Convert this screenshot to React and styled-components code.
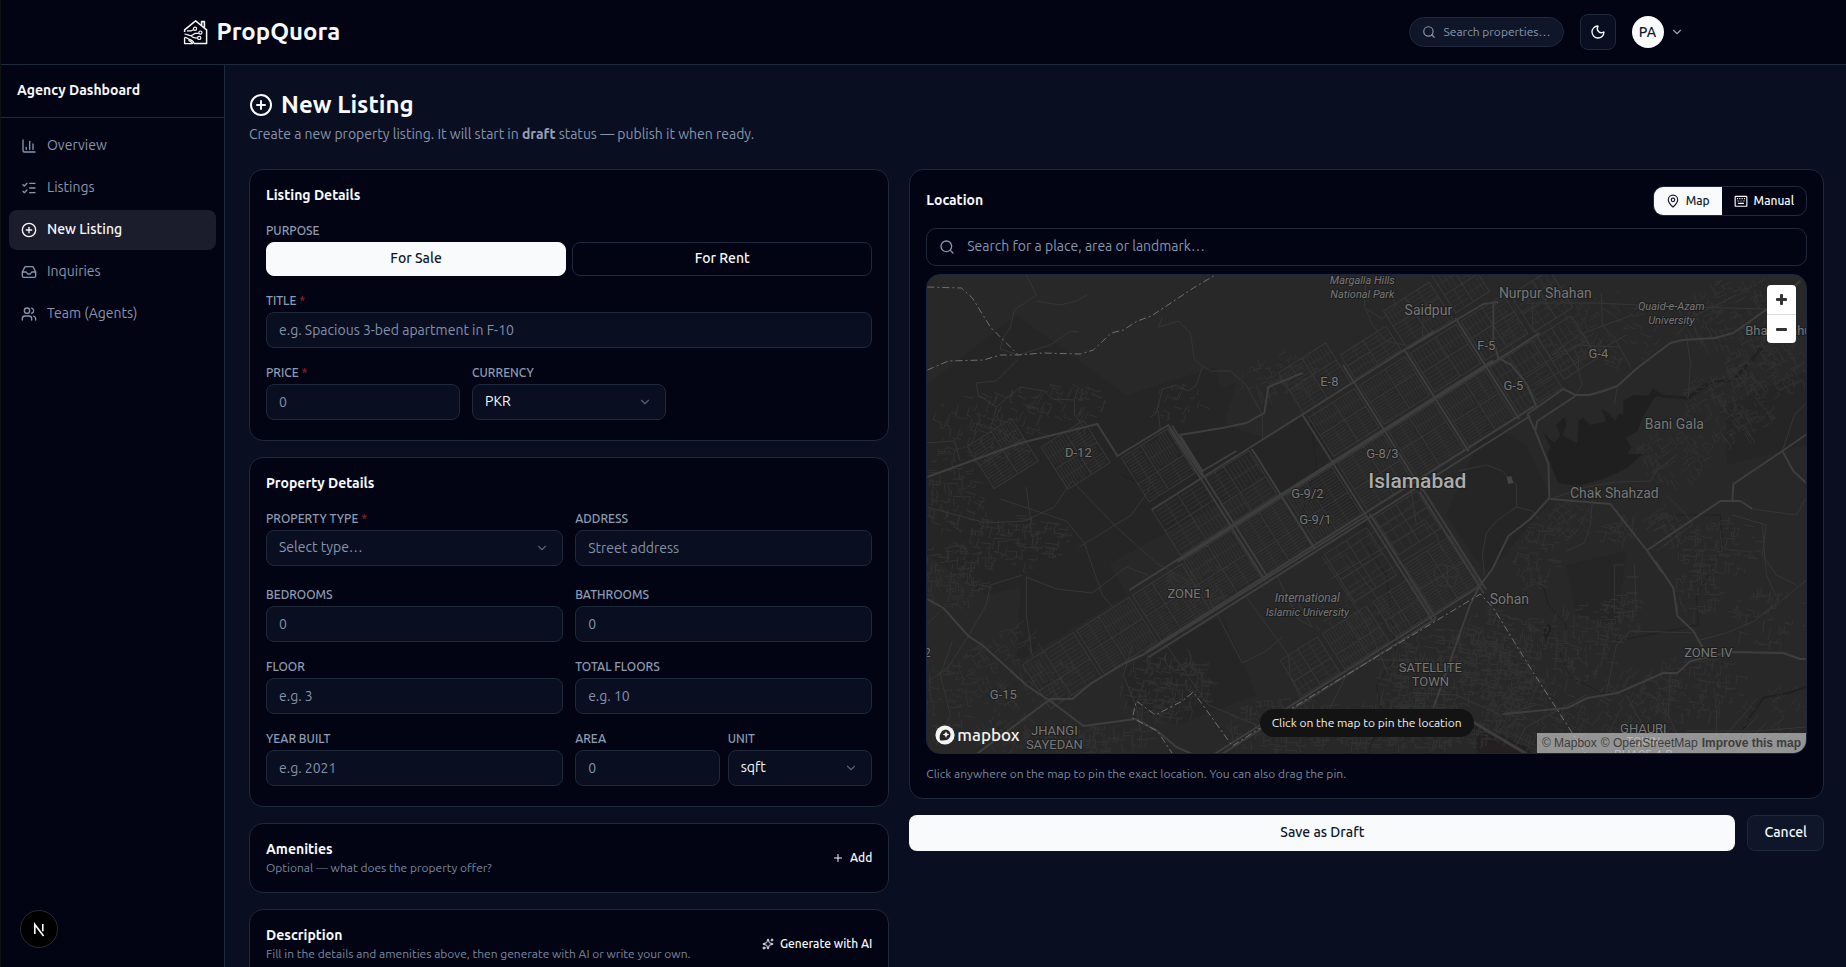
import React from "react";
import styled, { createGlobalStyle, css } from "styled-components";
import {
  ChartColumn,
  ChevronDown,
  CirclePlus,
  Inbox,
  ListChecks,
  MapPin,
  Moon,
  Plus,
  Search,
  Sparkles,
  Users
} from "lucide-react";

const GlobalStyle = createGlobalStyle`
  *, *::before, *::after {
    box-sizing: border-box;
  }
  body {
    margin: 0;
    background: #090e20;
    color: #f8fafc;
    font-family: Ubuntu, "Noto Sans", sans-serif;
    font-size: 14px;
    line-height: 20px;
  }
  button, input, select {
    font: inherit;
    color: inherit;
  }
  h1, h2, p {
    margin: 0;
  }
  a {
    color: inherit;
    text-decoration: none;
  }
`;

/* ---------- page shell ---------- */

const Page = styled.div`
  display: flex;
  flex-direction: column;
  height: 100vh;
  border-left: 1px solid #101113;
`;

const Header = styled.header`
  flex: none;
  background: #020414;
  border-bottom: 1px solid #1e293b;
`;

const HeaderInner = styled.div`
  display: flex;
  align-items: center;
  justify-content: space-between;
  height: 64px;
  max-width: 1536px;
  margin: 0 auto;
  padding: 0 8px 0 27px;
`;

const Brand = styled.a`
  display: flex;
  align-items: center;
  gap: 8px;
  font-size: 24px;
  line-height: 32px;
  font-weight: 600;
`;

const HeaderActions = styled.div`
  display: flex;
  align-items: center;
  gap: 16px;
`;

const HeaderSearch = styled.button`
  display: flex;
  align-items: center;
  gap: 8px;
  height: 30px;
  padding: 0 12px;
  border: 1px solid #1e293b;
  border-radius: 15px;
  background: #0f1629;
  color: #8896ad;
  font-size: 12px;
`;

const IconButton = styled.button`
  display: grid;
  place-items: center;
  width: 36px;
  height: 36px;
  padding: 0;
  border: 1px solid #1e293b;
  border-radius: 8px;
  background: #090e20;
`;

const AccountButton = styled.button`
  display: flex;
  align-items: center;
  gap: 6px;
  padding: 0;
  border: 0;
  background: none;
  color: #94a3b8;
`;

const Avatar = styled.span`
  display: grid;
  place-items: center;
  width: 32px;
  height: 32px;
  border-radius: 50%;
  background: #f8fafc;
  color: #0f172a;
  font-weight: 500;
`;

const Body = styled.div`
  display: flex;
  flex: 1;
  min-height: 0;
`;

/* ---------- sidebar ---------- */

const Sidebar = styled.aside`
  display: flex;
  flex-direction: column;
  flex: none;
  width: 224px;
  background: #020414;
  border-right: 1px solid #1e293b;
`;

const SidebarTitle = styled.div`
  padding: 15px 16px 17px;
  border-bottom: 1px solid #1e293b;
  font-weight: 600;
`;

const Nav = styled.nav`
  display: flex;
  flex-direction: column;
  flex: 1;
  gap: 2px;
  padding: 8px;
`;

const NavItem = styled.a`
  display: flex;
  align-items: center;
  gap: 10px;
  height: 40px;
  padding: 0 12px;
  border-radius: 8px;
  color: #8896ad;

  ${props =>
    props.$active &&
    css`
      background: #1b1d2d;
      color: #f8fafc;
      font-weight: 500;
    `}
`;

const NavText = styled.span`
  padding-bottom: 2px;
`;

const DevBadge = styled.button`
  display: grid;
  place-items: center;
  width: 38px;
  height: 38px;
  margin: 0 0 19px 19px;
  padding: 0;
  border: 1px solid #2b2c31;
  border-radius: 50%;
  background: #000;
`;

/* ---------- main ---------- */

const Main = styled.main`
  flex: 1;
  min-width: 0;
  padding: 24px 22px 24px 24px;
  overflow-y: auto;
  scrollbar-width: none;
`;

const PageTitle = styled.h1`
  display: flex;
  align-items: center;
  gap: 8px;
  font-size: 24px;
  line-height: 32px;
  font-weight: 600;
`;

const PageLead = styled.p`
  margin: 3px 0 25px;
  color: #8896ad;

  strong {
    font-weight: 600;
    color: #94a3b8;
  }
`;

const Columns = styled.form`
  display: grid;
  grid-template-columns: 7fr 10fr;
  align-items: start;
  gap: 20px;
`;

const Column = styled.div`
  display: flex;
  flex-direction: column;
  gap: 16px;
  min-width: 0;
`;

const Card = styled.section`
  padding: 16px;
  border: 1px solid #1e293b;
  border-radius: 14px;
  background: #020414;
`;

const FormCard = styled(Card)`
  display: flex;
  flex-direction: column;
  gap: 16px;
  padding-bottom: 20px;
`;

const CardTitle = styled.h2`
  padding-bottom: 2px;
  font-size: 14px;
  line-height: 18px;
  font-weight: 600;
`;

const CardHead = styled.div`
  display: flex;
  align-items: center;
  justify-content: space-between;
`;

const Hint = styled.p`
  color: #7b899f;
  font-size: 12px;
  line-height: 16px;
`;

const TextButton = styled.button`
  display: flex;
  align-items: center;
  gap: 6px;
  padding: 0;
  border: 0;
  background: none;
  font-size: 12px;
  font-weight: 500;
`;

/* ---------- form parts ---------- */

const FieldBox = styled.div`
  display: flex;
  flex-direction: column;
  gap: 2px;
  min-width: 0;
`;

const labelText = css`
  color: #8e9cb3;
  font-size: 12px;
  line-height: 18px;
  font-weight: 500;
  text-transform: uppercase;
`;

const Label = styled.label`
  ${labelText}
`;

const GroupLabel = styled.span`
  ${labelText}
`;

const Required = styled.span`
  color: #8f1f22;
`;

const control = css`
  width: 100%;
  height: 36px;
  padding: 0 12px;
  border: 1px solid #1e293b;
  border-radius: 8px;
  background: #090e20;
  outline: none;
`;

const Input = styled.input`
  ${control}

  &::placeholder {
    color: #8491a8;
    opacity: 1;
  }
`;

const SelectWrap = styled.div`
  position: relative;

  svg {
    position: absolute;
    top: 11px;
    right: 14px;
    color: #566277;
    pointer-events: none;
  }
`;

const SelectInput = styled.select`
  ${control}
  appearance: none;
  padding: 0 32px 2px 12px;
  color: ${props => (props.$empty ? "#8896ad" : "#f8fafc")};
`;

const FieldRow = styled.div`
  display: grid;
  grid-template-columns: repeat(${props => props.$cols || 2}, minmax(0, 1fr));
  gap: ${props => props.$gap || 12}px;
`;

const TypeRow = styled(FieldRow)`
  margin-bottom: 4px;
`;

const Choice = styled.button`
  height: 34px;
  padding: 0 12px 2px;
  border: 1px solid ${props => (props.$on ? "#f8fafc" : "#1e293b")};
  border-radius: 8px;
  background: ${props => (props.$on ? "#f8fafc" : "transparent")};
  color: ${props => (props.$on ? "#0f172a" : "#f8fafc")};
  font-weight: 500;
`;

const TextArea = styled.textarea`
  ${control}
  height: 120px;
  margin-top: 16px;
  padding: 8px 12px;
  font: inherit;
`;

/* ---------- location ---------- */

const ModeSwitch = styled.div`
  display: flex;
  height: 30px;
  border: 1px solid #1e293b;
  border-radius: 10px;
  overflow: hidden;
`;

const ModeButton = styled.button`
  display: flex;
  align-items: center;
  gap: 6px;
  padding: 0 12px;
  border: 0;
  background: ${props => (props.$on ? "#f8fafc" : "transparent")};
  color: ${props => (props.$on ? "#0f172a" : "#f8fafc")};
  font-size: 12px;
  font-weight: 500;
`;

const PlaceSearch = styled.label`
  display: flex;
  align-items: center;
  gap: 12px;
  height: 38px;
  margin: 12px 0 8px;
  padding: 0 12px;
  border: 1px solid #1e293b;
  border-radius: 10px;
  color: #8896ad;
`;

const PlaceInput = styled.input`
  flex: 1;
  padding: 0 0 2px;
  border: 0;
  outline: none;
  background: none;

  &::placeholder {
    color: #8896ad;
    opacity: 1;
  }
`;

const MapFrame = styled.div`
  position: relative;
  height: 480px;
  margin-bottom: 12px;
  border: 1px solid #1a2740;
  border-radius: 14px;
  background: #282828;
  overflow: hidden;
`;

const MapDrawing = styled.svg`
  display: block;
  width: 100%;
  height: 100%;
  font-family: Roboto, "Noto Sans", sans-serif;
`;

const ZoomControl = styled.div`
  position: absolute;
  top: 10px;
  right: 10px;
  display: flex;
  flex-direction: column;
  border-radius: 4px;
  background: #fff;
  overflow: hidden;
`;

const ZoomButton = styled.button`
  display: grid;
  place-items: center;
  width: 29px;
  height: 29px;
  padding: 0;
  border: 0;
  background: none;

  & + & {
    border-top: 1px solid #ddd;
  }
`;

const MapNotice = styled.div`
  position: absolute;
  bottom: 16px;
  left: 50%;
  transform: translateX(-50%);
  padding: 6px 12px;
  border-radius: 14px;
  background: #131313;
  color: #f1f1f1;
  font-size: 12px;
  line-height: 16px;
  white-space: nowrap;
`;

const MapboxMark = styled.a`
  position: absolute;
  bottom: 8px;
  left: 8px;
  display: flex;
  align-items: center;
  gap: 2px;
  color: #f4f4f4;
  font-size: 17px;
  line-height: 20px;
  font-weight: 500;
`;

const Attribution = styled.div`
  position: absolute;
  right: 0;
  bottom: 0;
  display: flex;
  gap: 4px;
  height: 20px;
  padding: 0 5px;
  background: rgba(255, 255, 255, 0.5);
  color: #3d3d3d;
  font-family: "Liberation Sans", Arial, sans-serif;
  font-size: 12px;
  line-height: 20px;

  a:last-child {
    font-weight: 700;
  }
`;

const FormActions = styled.div`
  display: flex;
  gap: 12px;
`;

const SaveButton = styled.button`
  flex: 1;
  height: 36px;
  padding: 0 0 2px;
  border: 0;
  border-radius: 8px;
  background: #f8fafc;
  color: #0f172a;
  font-weight: 500;
`;

const CancelButton = styled.button`
  height: 36px;
  padding: 0 16px 2px;
  border: 1px solid #1e293b;
  border-radius: 8px;
  background: #0f1629;
  font-weight: 500;
`;

/* ---------- map data ---------- */

// small seeded generator, so the street pattern is the same on every load
const makeRandom = seed => () => {
  seed = (seed * 16807) % 2147483647;
  return seed / 2147483647;
};

// sectors on the city grid: [u, v, width, height, density]
const sectors = [
  [-240, -58, 58, 54, 3],
  [-178, -120, 58, 54, 4],
  [-178, -60, 56, 56, 3],
  [-116, -60, 54, 56, 3],
  [-57, -60, 54, 56, 3],
  [4, -60, 54, 56, 3],
  [4, -114, 54, 46, 3],
  [64, -60, 54, 56, 3],
  [64, -114, 54, 46, 3],
  [64, -150, 54, 28, 4],
  [124, -60, 54, 56, 3],
  [124, -114, 54, 46, 4],
  [124, -164, 54, 44, 4],
  [184, -60, 50, 56, 5],
  [184, -114, 50, 46, 4],
  [184, -170, 40, 46, 5],
  [2, -168, 56, 48, 4],
  [-116, -118, 52, 52, 4],
  [6, 6, 50, 44, 9],
  [6, 62, 54, 56, 3],
  [-40, 76, 42, 42, 3],
  [-100, 76, 52, 42, 3],
  [-150, 76, 44, 42, 5],
  [-56, 10, 50, 56, 11],
  [-370, -58, 60, 52, 4],
  [-306, -58, 62, 52, 3],
  [-238, -232, 50, 50, 3],
  [-176, -180, 54, 52, 3],
  [-300, -272, 52, 50, 3],
  [240, -60, 40, 50, 7],
  [240, -110, 46, 44, 7]
];

const buildSectors = () => {
  const rand = makeRandom(71);
  const fine = [];
  const mid = [];
  sectors.forEach(([u, v, w, h, step]) => {
    mid.push(`M${u} ${v}h${w}v${h}h${-w}z`);
    const cx = Math.round(u + w * (0.4 + rand() * 0.2));
    const cy = Math.round(v + h * (0.4 + rand() * 0.2));
    mid.push(`M${cx} ${v}v${h}M${u} ${cy}h${w}`);
    [
      [u, v, cx, cy],
      [cx, v, u + w, cy],
      [u, cy, cx, v + h],
      [cx, cy, u + w, v + h]
    ].forEach(([x0, y0, x1, y1]) => {
      const across = rand() > 0.5;
      if (across) {
        for (let y = y0 + step; y < y1 - 1; y += step) {
          const a = x0 + Math.floor(rand() * 4);
          const b = x1 - Math.floor(rand() * 5);
          fine.push(`M${a} ${y}H${b}`);
        }
        fine.push(`M${Math.round((x0 + x1) / 2)} ${y0}V${y1}`);
      } else {
        for (let x = x0 + step; x < x1 - 1; x += step) {
          const a = y0 + Math.floor(rand() * 4);
          const b = y1 - Math.floor(rand() * 5);
          fine.push(`M${x} ${a}V${b}`);
        }
        fine.push(`M${x0} ${Math.round((y0 + y1) / 2)}H${x1}`);
      }
    });
  });
  return { fine: fine.join(""), mid: mid.join("") };
};

// loose suburbs: [centre x, centre y, radius x, radius y, lanes, angle]
const suburbs = [
  [530, 410, 80, 60, 520, 0.1],
  [470, 450, 70, 26, 240, 0.1],
  [570, 380, 40, 50, 160, 0.3],
  [360, 450, 60, 28, 150, 0],
  [240, 410, 45, 34, 170, 0.2],
  [90, 395, 60, 44, 130, -0.5],
  [25, 300, 36, 34, 120, 0],
  [90, 265, 50, 26, 110, 0.1],
  [60, 150, 60, 34, 90, 0.3],
  [130, 125, 50, 22, 60, 0.4],
  [20, 200, 30, 30, 50, 0],
  [20, 420, 26, 40, 50, 0],
  [95, 460, 60, 20, 80, -0.6],
  [180, 465, 40, 16, 70, 0],
  [30, 235, 36, 20, 40, 0.4],
  [270, 310, 32, 26, 90, -0.5],
  [250, 125, 26, 20, 24, 0.4],
  [350, 100, 40, 22, 70, -0.4],
  [630, 50, 60, 36, 80, -0.5],
  [690, 50, 50, 40, 50, 0.5],
  [805, 40, 60, 36, 140, -0.4],
  [840, 88, 44, 30, 130, -0.5],
  [800, 130, 50, 34, 140, -0.5],
  [745, 180, 40, 26, 80, -0.6],
  [610, 280, 22, 34, 60, 0.2],
  [645, 240, 20, 18, 50, 0.8],
  [690, 250, 22, 16, 30, 0.2],
  [735, 250, 20, 14, 40, -0.5],
  [790, 270, 40, 28, 90, 0.1],
  [770, 315, 24, 24, 50, 0],
  [640, 365, 50, 40, 130, 0.1],
  [690, 340, 30, 20, 50, 0.1],
  [765, 410, 50, 30, 110, 0.1],
  [710, 430, 40, 40, 110, 0.6],
  [610, 440, 50, 34, 110, 0.4],
  [840, 340, 40, 30, 50, 0.2],
  [850, 440, 40, 30, 40, -0.8],
  [430, 340, 50, 20, 40, -0.5]
];

const buildSuburbs = () => {
  const rand = makeRandom(911);
  const out = [];
  suburbs.forEach(([cx, cy, rx, ry, n, tilt]) => {
    for (let i = 0; i < n; i++) {
      const t = rand() * Math.PI * 2;
      const r = Math.sqrt(rand());
      const x = cx + Math.cos(t) * r * rx;
      const y = cy + Math.sin(t) * r * ry;
      const turn = tilt + (rand() > 0.5 ? 0 : Math.PI / 2) + (rand() - 0.5) * 0.3;
      const len = 3 + rand() * 9;
      const side = (rand() - 0.5) * 8;
      const dx = Math.cos(turn);
      const dy = Math.sin(turn);
      out.push(
        `M${x.toFixed(1)} ${y.toFixed(1)}l${(dx * len).toFixed(1)} ${(dy * len).toFixed(1)}` +
          `l${(-dy * side).toFixed(1)} ${(dx * side).toFixed(1)}`
      );
    }
  });
  return out.join("");
};

const cityGrid = buildSectors();
const suburbLanes = buildSuburbs();

const land = [
  "M0 110L90 40L200 120L290 92L300 150L360 170L320 215L180 290L60 320L0 280Z",
  "M100 120L210 140L310 108L300 140L190 180L150 150Z",
  "M390 148L446 260L330 200Z",
  "M96 290L170 262L200 320L90 388Z",
  "M330 170L378 140L408 188L356 220Z",
  "M196 395L296 340L330 420L250 450L200 430Z",
  "M560 150L600 170L625 225L560 300L520 240Z",
  "M800 130L880 96V170L800 190Z",
  "M640 290L700 276L690 350L650 340Z"
];

const lanes = [
  "M100 0L110 20L88 35L84 52L76 64L74 74L92 80",
  "M110 26L134 30L150 26L160 20",
  "M92 80L124 70L144 56L152 57",
  "M92 84L80 96L70 106L50 108L52 120L70 132L66 148L84 164",
  "M70 132L94 112L118 116L126 124L148 125L152 112",
  "M148 125L148 140L158 152L158 160",
  "M236 42L232 52L252 46L264 58L268 84L276 92L270 110L262 116L250 110L236 114L230 138L224 142",
  "M276 90L284 96L304 96L320 110L336 140L336 164",
  "M232 136L234 155",
  "M0 168L28 166L34 186",
  "M100 212L104 244L98 246L60 248L0 232",
  "M98 246L128 232L140 214L146 206",
  "M146 206L190 252L230 288L262 306",
  "M74 224L140 246L158 268L176 320L186 332",
  "M100 302L100 340L106 382",
  "M100 302L130 314L166 318L200 292L222 300",
  "M153 272L205 240L222 216L224 200",
  "M42 361L22 392L0 408",
  "M42 361L60 330L64 310L96 300",
  "M17 333L0 350M26 366L14 400L24 440L10 470",
  "M206 370L197 400L210 432L214 456",
  "M240 370L282 430L330 450",
  "M240 378a13 12 0 1 0 20 -4",
  "M290 338L316 388L340 376L356 362",
  "M320 322L362 380L364 402L378 430",
  "M372 328L386 352L372 344L350 300",
  "M420 280L470 350L480 370",
  "M396 282L440 348L462 400",
  "M396 290L486 232M404 304L500 248M420 320L510 266",
  "M484 210L490 250L498 244L510 260L516 276",
  "M508 300a8 8 0 0 1 10 -10l14 4l-4 18l-16 -2zM521 292v18M510 302h20",
  "M440 0L438 30L446 50L460 66L478 70",
  "M440 34L456 44L470 30L464 20",
  "M497 44L496 64M606 28L606 50L616 70L626 84",
  "M600 28L667 28L760 32L841 34",
  "M675 18L676 50L690 66L704 92",
  "M640 74L626 80L652 60L706 40",
  "M590 104L650 70L694 72M610 110L700 60",
  "M652 80L652 96L656 110L650 118",
  "M691 111L688 130M760 60L764 88L762 122",
  "M750 60L770 40L790 30L810 20",
  "M532 196L560 190L576 196L590 210L590 232L606 236L612 244",
  "M590 232L570 246L560 258L556 280L558 300",
  "M624 224L660 212L690 207L724 206L730 196L750 180",
  "M666 226L664 250L658 268L640 276",
  "M740 220L760 240L766 250L730 276",
  "M826 234L870 240L880 222M806 240L840 250L836 280L850 300L870 310",
  "M856 176L868 140L880 128",
  "M836 250L840 300L852 326L828 346L800 358L770 366",
  "M698 290L688 290L688 338L710 336L708 290M700 302h12M700 318h12",
  "M880 305L850 330L830 344M770 358L704 356L690 370L680 418",
  "M484 386L440 384L420 400L400 440M484 418L530 420L574 440L610 430",
  "M660 420L600 452L590 470M790 434L790 460L776 470M760 456L830 456L880 452",
  "M790 470L826 430M800 474L832 440M810 478L840 448",
  "M710 480L716 450L700 420M744 398L742 440L756 470"
];

const roads = [
  "M601 139L609 156L622 189L623 223L604 244L582 261L566 294L554 310L544 329L532 363L507 433",
  "M609 155L611 146L649 121",
  "M481 74L557 29L572 27",
  "M567 27L567 66L572 83L585 90L601 110L610 132",
  "M601 139L637 114L649 120L663 120L677 116L691 111L711 93L744 68L756 65L789 63L807 58L841 34L874 6",
  "M577 439L641 433L661 423L691 418L737 398L751 398L764 386L804 377L857 378L874 384L882 384",
  "M729 286L747 313L751 341L767 356L777 374",
  "M624 224L684 229L721 276L736 298",
  "M721 275L794 226L814 226L826 234",
  "M806 226L807 209L856 176L882 158M856 176L867 196L882 210",
  "M1 324L17 333L42 361L57 371L101 411L124 426L157 451L209 444L231 456L250 472L268 480",
  "M49 480L124 424L146 424L164 409L197 389",
  "M197 389L220 378L440 241",
  "M1 202L94 168L171 149L191 181L242 150L276 201",
  "M253 160L296 153L320 148L338 138L342 112L376 98",
  "M254 161L276 196L310 176"
];

const borders = [
  "M1 12L35 13L46 23L64 52L92 80",
  "M1 95L22 86L57 85L74 80L92 80L116 78L154 79L167 75L185 58L197 55L211 46L225 41L267 13L289 0",
  "M247 480L231 456L206 443L210 426L229 440L256 426L267 417L306 471L334 453L364 434L554 319L567 333L604 393L660 480"
];

// [text, x, y, size, kind]
const places = [
  ["Margalla Hills", 436, 9, 11, "park"],
  ["National Park", 436, 23, 11, "park"],
  ["Saidpur", 502, 40, 14],
  ["Nurpur Shahan", 619, 23, 14],
  ["Quaid-e-Azam", 745, 35, 11, "park"],
  ["University", 745, 49, 11, "park"],
  ["Bhara Kahu", 852, 60, 13],
  ["F-5", 560, 75, 13],
  ["G-4", 672, 83, 13],
  ["G-5", 587, 115, 13],
  ["E-8", 403, 111, 13],
  ["D-12", 152, 182, 13],
  ["G-8/3", 456, 183, 13],
  ["Islamabad", 491, 213, 21, "city"],
  ["G-9/2", 381, 223, 13],
  ["G-9/1", 389, 249, 13],
  ["Bani Gala", 748, 154, 14],
  ["Chak Shahzad", 688, 223, 14],
  ["ZONE 1", 263, 323, 13],
  ["International", 381, 327, 12, "park"],
  ["Islamic University", 381, 341, 11, "park"],
  ["Sohan", 583, 329, 14],
  ["ZONE IV", 782, 382, 13],
  ["SATELLITE", 504, 397, 13],
  ["TOWN", 504, 411, 13],
  ["2", 1, 382, 12],
  ["G-15", 77, 424, 13],
  ["JHANGI", 128, 460, 13],
  ["SAYEDAN", 128, 474, 13],
  ["GHAURI", 717, 458, 13],
  ["TOWN", 717, 471, 12],
  ["PHASE 4-B", 717, 484, 12]
];

const PlaceName = styled.text`
  text-anchor: middle;
  paint-order: stroke;
  stroke: #1e1e1e;
  stroke-width: 2px;
  fill: ${props => (props.$kind === "city" ? "#acacac" : "#777")};
  font-style: ${props => (props.$kind === "park" ? "italic" : "normal")};
  font-weight: ${props => (props.$kind === "city" ? 500 : 400)};
`;

const CityMap = () => (
  <MapDrawing viewBox="0 0 880 478" preserveAspectRatio="xMidYMid slice" aria-label="Map of Islamabad">
    <rect width="880" height="478" fill="#282828" />
    {land.map(d => (
      <path key={d} d={d} fill="#252525" />
    ))}
    <g fill="#1f1f1f">
      <path d="M697 126L707 120L722 121L727 113L734 119L727 124L716 143L711 156L699 163L705 172L701 179L716 179L701 193L677 204L651 211L632 208L626 194L621 179L624 172L617 158L628 168L634 160L630 150L638 142L640 150L636 160L642 164L651 168L652 146L657 143L664 150L674 148L680 146L675 134L682 138L689 146L692 139L697 139Z" />
      <path d="M617 359q4 -14 8 -8l-2 20z" />
    </g>
    <g fill="none" stroke="#202020">
      <path strokeWidth="3" d="M728 118L736 121L762 123L784 107L807 105L827 83L842 64" />
      <path strokeWidth="2" d="M882 411L862 418L837 423L821 446L814 463L806 478" />
      <path d="M616 308L622 330L640 350L634 380L644 402L680 420M384 140L390 190L376 240M440 270L460 300L466 350L470 380L450 410L456 440L442 478M196 200L220 212L236 226M750 240L794 240L796 270L782 300L770 322L772 350L690 366" />
    </g>
    <path d="M545 446L600 472L606 480L552 480Z" fill="#242021" />
    <path d={suburbLanes} fill="none" stroke="#323232" strokeWidth="1" />
    {lanes.map(d => (
      <path key={d} d={d} fill="none" stroke="#363636" />
    ))}
    <g transform="translate(440 241) rotate(-32.3)" fill="none">
      <path d={cityGrid.fine} stroke="#313131" />
      <path d={cityGrid.mid} stroke="#373737" />
      <g stroke="#3d3d3d" strokeWidth="2">
        <path d="M-260 3H192M-260 -3H200M-184 -62H244M-240 -64H190M-178 -120H60M-120 -120H156" />
        <path d="M-120 -180V0M-116 -180V0M-61 -118V0M0 -120V124M4 0V124M61 -140V8M121 -121V0M181 -120V0M62 8V126" />
        <path d="M-260 120H60M-260 124H4" />
        <path d="M58 8V128" />
      </g>
    </g>
    {roads.map(d => (
      <path key={d} d={d} fill="none" stroke="#3e3e3e" strokeWidth="2" strokeLinejoin="round" />
    ))}
    <path d="M545 446L602 480" fill="none" stroke="#3d3d3d" strokeWidth="3" />
    {borders.map(d => (
      <path key={d} d={d} fill="none" stroke="#707070" strokeDasharray="7 3 2 3" />
    ))}
    <path d="M580 202l5 -1l2 7l-5 1z" fill="#444" />
    {places.map(([text, x, y, size, kind]) => (
      <PlaceName key={text + y} x={x} y={y} fontSize={size} $kind={kind}>
        {text}
      </PlaceName>
    ))}
  </MapDrawing>
);

/* ---------- drawings ---------- */

const HouseLogo = () => (
  <svg width="26" height="26" viewBox="0 0 26 26" fill="none" stroke="#f8f5ee" strokeLinejoin="round" aria-hidden="true">
    <path strokeWidth="1.5" d="M1.6 13V10.8L12.6 1.8L23.6 10.8V24.6H11" />
    <path strokeWidth="1.6" d="M18.6 6V2.6H21.4V8.6" />
    <path strokeWidth="1.4" d="M1.6 18.4V24.6H9.4C9 22.8 7.4 22 5.4 21.4" />
    <path strokeWidth="1.2" d="M1.6 18.4C3.6 18.2 4.8 19.8 6.6 20.4S10.4 22 11 24.6" />
    <path strokeWidth="1.2" d="M1.4 15C4 15 5.4 16.6 7.6 16.6S10.6 14.6 12.4 14.4H15.8M7.6 16.6C9 18.4 11 18.9 14.6 18.9" />
    <path strokeWidth="1.2" d="M4 11.8H8.4L10.4 10.8" />
    <circle strokeWidth="1.2" cx="12" cy="9.8" r="1.6" />
    <circle strokeWidth="1.2" cx="17.4" cy="13.6" r="1.6" />
    <circle strokeWidth="1.2" cx="16.2" cy="18.9" r="1.6" />
  </svg>
);

const KeyboardIcon = () => (
  <svg width="14" height="14" viewBox="0 0 24 24" fill="none" stroke="currentColor" strokeWidth="2" aria-hidden="true">
    <rect x="2" y="4" width="20" height="17" rx="1" />
    <path d="M5 8h2M9 8h2M13 8h2M17 8h2M6 12h2M10 12h1M13 12h1M16 12h2M7 16h10" />
  </svg>
);

const MapboxLogo = () => (
  <svg width="20" height="20" viewBox="0 0 20 20" aria-hidden="true">
    <circle cx="10" cy="10" r="9.6" fill="#f4f4f4" />
    <path d="M5 15.2C4.2 11.4 4.9 8.4 6.8 6.4C9 4.3 12.3 4.4 14.2 6.3C16.1 8.2 16 11.5 13.9 13.6C11.8 15.6 8.6 15.9 5 15.2Z" fill="#252525" />
    <path d="M11 6.2L12 8.6L14.4 9.6L12 10.6L11 13L10 10.6L7.6 9.6L10 8.6Z" fill="#f4f4f4" />
  </svg>
);

const NextMark = () => (
  <svg width="18" height="18" viewBox="0 0 18 18" fill="none" stroke="#fff" strokeWidth="1.6" aria-hidden="true">
    <path d="M4.8 14V4.4L13.6 16" />
    <path d="M12.8 4V11.2" />
  </svg>
);

const ZoomSign = ({ plus }) => (
  <svg width="13" height="13" viewBox="0 0 13 13" fill="#333" aria-hidden="true">
    <rect x="1" y="5" width="11" height="3" rx="1" />
    {plus && <rect x="5" y="1" width="3" height="11" rx="1" />}
  </svg>
);

/* ---------- fields ---------- */

const Field = ({ id, label, required, ...rest }) => (
  <FieldBox>
    <Label htmlFor={id}>
      {label} {required && <Required>*</Required>}
    </Label>
    <Input id={id} name={id} {...rest} />
  </FieldBox>
);

const SelectField = ({ id, label, required, options, empty }) => (
  <FieldBox>
    <Label htmlFor={id}>
      {label} {required && <Required>*</Required>}
    </Label>
    <SelectWrap>
      <SelectInput id={id} name={id} $empty={empty}>
        {options.map(option => (
          <option key={option}>{option}</option>
        ))}
      </SelectInput>
      <ChevronDown size={14} />
    </SelectWrap>
  </FieldBox>
);

const navItems = [
  ["Overview", ChartColumn],
  ["Listings", ListChecks],
  ["New Listing", CirclePlus],
  ["Inquiries", Inbox],
  ["Team (Agents)", Users]
];

class App extends React.Component {
  state = { purpose: "For Sale", mode: "Map" };

  setPurpose = purpose => this.setState({ purpose });

  setMode = mode => this.setState({ mode });

  render() {
    const { purpose, mode } = this.state;
    return (
      <Page>
        <GlobalStyle />
        <Header>
          <HeaderInner>
            <Brand href="#home">
              <HouseLogo />
              PropQuora
            </Brand>
            <HeaderActions>
              <HeaderSearch type="button">
                <Search size={14} />
                Search properties…
              </HeaderSearch>
              <IconButton type="button" aria-label="Toggle theme">
                <Moon size={16} />
              </IconButton>
              <AccountButton type="button" aria-label="Account menu">
                <Avatar>PA</Avatar>
                <ChevronDown size={14} />
              </AccountButton>
            </HeaderActions>
          </HeaderInner>
        </Header>

        <Body>
          <Sidebar>
            <SidebarTitle>Agency Dashboard</SidebarTitle>
            <Nav>
              {navItems.map(([name, Icon]) => (
                <NavItem key={name} href={"#" + name} $active={name === "New Listing"}>
                  <Icon size={16} />
                  <NavText>{name}</NavText>
                </NavItem>
              ))}
            </Nav>
            <DevBadge type="button" aria-label="Open dev tools">
              <NextMark />
            </DevBadge>
          </Sidebar>

          <Main>
            <PageTitle>
              <CirclePlus size={24} />
              New Listing
            </PageTitle>
            <PageLead>
              Create a new property listing. It will start in <strong>draft</strong> status — publish it when ready.
            </PageLead>

            <Columns onSubmit={e => e.preventDefault()}>
              <Column>
                <FormCard>
                  <CardTitle>Listing Details</CardTitle>
                  <FieldBox role="group" aria-labelledby="purpose">
                    <GroupLabel id="purpose">Purpose</GroupLabel>
                    <FieldRow $gap={6}>
                      {["For Sale", "For Rent"].map(name => (
                        <Choice
                          key={name}
                          type="button"
                          $on={purpose === name}
                          aria-pressed={purpose === name}
                          onClick={() => this.setPurpose(name)}
                        >
                          {name}
                        </Choice>
                      ))}
                    </FieldRow>
                  </FieldBox>
                  <Field id="title" label="Title" required placeholder="e.g. Spacious 3-bed apartment in F-10" />
                  <FieldRow $cols={3}>
                    <Field id="price" label="Price" required placeholder="0" />
                    <SelectField id="currency" label="Currency" options={["PKR", "USD"]} />
                  </FieldRow>
                </FormCard>

                <FormCard>
                  <CardTitle>Property Details</CardTitle>
                  <TypeRow>
                    <SelectField
                      id="type"
                      label="Property type"
                      required
                      empty
                      options={["Select type…", "House", "Apartment"]}
                    />
                    <Field id="address" label="Address" placeholder="Street address" />
                  </TypeRow>
                  <FieldRow>
                    <Field id="bedrooms" label="Bedrooms" placeholder="0" />
                    <Field id="bathrooms" label="Bathrooms" placeholder="0" />
                  </FieldRow>
                  <FieldRow>
                    <Field id="floor" label="Floor" placeholder="e.g. 3" />
                    <Field id="floors" label="Total floors" placeholder="e.g. 10" />
                  </FieldRow>
                  <FieldRow>
                    <Field id="year" label="Year built" placeholder="e.g. 2021" />
                    <FieldRow $gap={8}>
                      <Field id="area" label="Area" placeholder="0" />
                      <SelectField id="unit" label="Unit" options={["sqft", "sqm"]} />
                    </FieldRow>
                  </FieldRow>
                </FormCard>

                <Card>
                  <CardHead>
                    <div>
                      <CardTitle>Amenities</CardTitle>
                      <Hint>Optional — what does the property offer?</Hint>
                    </div>
                    <TextButton type="button">
                      <Plus size={12} />
                      Add
                    </TextButton>
                  </CardHead>
                </Card>

                <Card>
                  <CardHead>
                    <div>
                      <CardTitle>Description</CardTitle>
                      <Hint>Fill in the details and amenities above, then generate with AI or write your own.</Hint>
                    </div>
                    <TextButton type="button">
                      <Sparkles size={12} />
                      Generate with AI
                    </TextButton>
                  </CardHead>
                  <TextArea aria-label="Description" />
                </Card>
              </Column>

              <Column>
                <Card>
                  <CardHead>
                    <CardTitle>Location</CardTitle>
                    <ModeSwitch>
                      <ModeButton type="button" $on={mode === "Map"} onClick={() => this.setMode("Map")}>
                        <MapPin size={14} />
                        Map
                      </ModeButton>
                      <ModeButton type="button" $on={mode === "Manual"} onClick={() => this.setMode("Manual")}>
                        <KeyboardIcon />
                        Manual
                      </ModeButton>
                    </ModeSwitch>
                  </CardHead>
                  <PlaceSearch>
                    <Search size={16} />
                    <PlaceInput aria-label="Search for a place" placeholder="Search for a place, area or landmark…" />
                  </PlaceSearch>
                  <MapFrame>
                    <CityMap />
                    <ZoomControl>
                      <ZoomButton type="button" aria-label="Zoom in">
                        <ZoomSign plus />
                      </ZoomButton>
                      <ZoomButton type="button" aria-label="Zoom out">
                        <ZoomSign />
                      </ZoomButton>
                    </ZoomControl>
                    <MapboxMark href="#mapbox">
                      <MapboxLogo />
                      mapbox
                    </MapboxMark>
                    <Attribution>
                      <a href="#about">© Mapbox</a>
                      <a href="#osm">© OpenStreetMap</a>
                      <a href="#improve">Improve this map</a>
                    </Attribution>
                    <MapNotice>Click on the map to pin the location</MapNotice>
                  </MapFrame>
                  <Hint>Click anywhere on the map to pin the exact location. You can also drag the pin.</Hint>
                </Card>
                <FormActions>
                  <SaveButton type="submit">Save as Draft</SaveButton>
                  <CancelButton type="button">Cancel</CancelButton>
                </FormActions>
              </Column>
            </Columns>
          </Main>
        </Body>
      </Page>
    );
  }
}

export default App;
